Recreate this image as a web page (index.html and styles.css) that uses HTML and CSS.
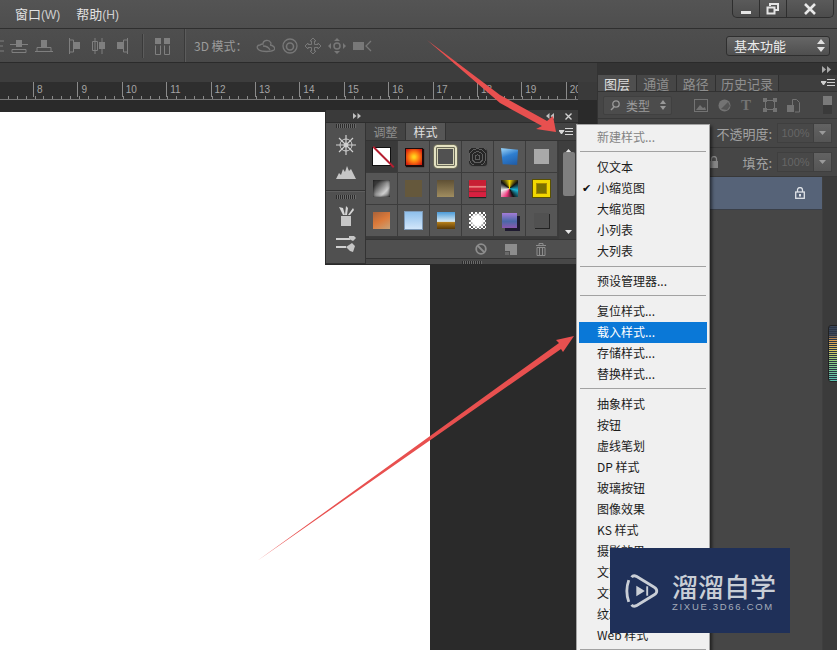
FILE: index.html
```html
<!DOCTYPE html>
<html lang="zh">
<head>
<meta charset="utf-8">
<title>样式菜单</title>
<link rel="stylesheet" href="styles.css">
</head>
<body>
<div class="app">
  <header class="menubar">
    <nav class="menus"><span class="menu-word">窗口<i>(W)</i></span><span class="menu-word">帮助<i>(H)</i></span></nav>
    <div class="winctl">
      <span class="winbtn"><svg width="12" height="12" viewBox="0 0 12 12"><rect x="1" y="8" width="10" height="3" fill="#e4e4e4"/></svg></span>
      <span class="winbtn"><svg width="14" height="12" viewBox="0 0 14 12"><path d="M4 3V1h8v6h-3M1.500 4.500h7v6h-7z" fill="none" stroke="#e4e4e4" stroke-width="2"/></svg></span>
      <span class="winbtn wide"><svg width="12" height="12" viewBox="0 0 12 12"><path d="M1 1l10 10M11 1L1 11" stroke="#e8e8e8" stroke-width="2.600"/></svg></span>
    </div>
  </header>

  <section class="options">
    <svg class="oi first" width="4" height="16" viewBox="0 0 4 16"><path d="M0 3h4M0 8h3M0 13h4" stroke="#7f7f7f"/></svg>
    <svg class="oi a" width="18" height="16" viewBox="0 0 18 16"><path d="M0 6.500h18M2 11.500h14M2 11.500v3h14v-3" fill="none" stroke="#7f7f7f"/><rect x="6" y="2" width="6" height="7" fill="#7f7f7f"/></svg>
    <svg class="oi b" width="18" height="16" viewBox="0 0 18 16"><path d="M0 13.500h18M2 9.500v4M16 9.500v4M2 9.500h14" fill="none" stroke="#7f7f7f"/><rect x="6" y="2" width="6" height="7" fill="#7f7f7f"/></svg>
    <svg class="oi gap" width="13" height="18" viewBox="0 0 13 18"><path d="M1.500 1v16M1.500 3h4v12h-4" fill="none" stroke="#7f7f7f"/><rect x="6" y="5" width="6" height="7" fill="#7f7f7f"/></svg>
    <svg class="oi v" width="13" height="18" viewBox="0 0 13 18"><path d="M3 1v16M3 4.500H0.500v9H5.500v-9zM10 1v16" fill="none" stroke="#7f7f7f"/><rect x="7" y="5" width="6" height="7" fill="#7f7f7f"/></svg>
    <svg class="oi v" width="13" height="18" viewBox="0 0 13 18"><path d="M11.500 1v16M11.500 3h-4v12h4" fill="none" stroke="#7f7f7f"/><rect x="1" y="5" width="6" height="7" fill="#7f7f7f"/></svg>
    <span class="osep first-sep"></span>
    <svg class="oi dist" width="17" height="18" viewBox="0 0 17 18"><path d="M1.500 8.500v9h5v-9M10.500 8.500v9h5v-9" fill="none" stroke="#7f7f7f"/><rect x="1" y="1" width="6" height="6" fill="#7f7f7f"/><rect x="10" y="1" width="6" height="6" fill="#7f7f7f"/></svg>
    <span class="osep second-sep"></span>
    <span class="mode">3D 模式：</span>
    <svg class="oi m3" width="19" height="16" viewBox="0 0 19 16"><path d="M3 12c-3-2-2-5 1-5 1-1 2-1 3-1 0-4 6-5 8-1 0 1 0 2-1 2 3 0 6 3 4 5-3 2-12 2-15 0zM7 8c3 0 6 2 7 4" fill="none" stroke="#787878" stroke-width="1.300"/></svg>
    <svg class="oi m3" width="16" height="16" viewBox="0 0 16 16"><circle cx="8" cy="8" r="7" fill="none" stroke="#787878" stroke-width="1.300"/><circle cx="8" cy="8.500" r="3.500" fill="none" stroke="#787878" stroke-width="1.600"/></svg>
    <svg class="oi m3" width="16" height="16" viewBox="0 0 16 16"><path d="M8 0l3 3H9.500v3.500H13V5l3 3-3 3V9.500H9.500V13H11l-3 3-3-3h1.500V9.500H3V11L0 8l3-3v1.500h3.500V3H5z" fill="none" stroke="#787878"/></svg>
    <svg class="oi m3" width="18" height="16" viewBox="0 0 18 16"><path d="M9 0l3 3H6zM9 16l3-3H6zM0 8l3-3v6zM18 8l-3-3v6z" fill="#787878"/><circle cx="9" cy="8" r="3" fill="none" stroke="#787878" stroke-width="1.500"/></svg>
    <svg class="oi m3" width="19" height="12" viewBox="0 0 19 12"><rect x="0" y="2" width="11" height="8" fill="#787878"/><path d="M18 1l-5 5 5 5" fill="none" stroke="#787878" stroke-width="1.300"/></svg>
    <span class="workspace">基本功能<svg width="8" height="13" viewBox="0 0 8 13"><path d="M4 0l4 5H0zM4 13l4-5H0z" fill="#e0e0e0"/></svg></span>
  </section>

  <main class="work">
    <section class="doc">
      <div class="doctabs"></div>
      <div class="ruler-row">
        <div class="ruler">
          <span class="rn lead"></span><span class="rn">8</span><span class="rn">9</span><span class="rn">10</span><span class="rn">11</span><span class="rn">12</span><span class="rn">13</span><span class="rn">14</span><span class="rn">15</span><span class="rn">16</span><span class="rn">17</span><span class="rn">18</span><span class="rn">19</span><span class="rn">20</span>
        </div>
      </div>
      <div class="pasteboard"><div class="canvas"></div></div>
    </section>

    <aside class="side">
      <div class="side-head"><svg width="9" height="7" viewBox="0 0 9 7"><path d="M0 0l4 3.500L0 7zM5 0l4 3.500L5 7z" fill="#a8a8a8"/></svg></div>
      <div class="side-tabs">
        <span class="stab on">图层</span><span class="stab">通道</span><span class="stab">路径</span><span class="stab four">历史记录</span>
        <svg class="side-menu" width="14" height="8" viewBox="0 0 14 8"><path d="M0 2.500h5L2.500 6zM6 .5h8M6 3.500h8M6 6.500h8" fill="#d0d0d0" stroke="#d0d0d0" stroke-width="1"/></svg>
      </div>
      <div class="filter-row">
        <span class="kind"><svg width="10" height="11" viewBox="0 0 10 11"><circle cx="6" cy="4" r="3.200" fill="none" stroke="#999" stroke-width="1.300"/><path d="M4 7l-3 3" stroke="#999" stroke-width="1.500"/></svg><b>类型</b><svg class="updown" width="6" height="10" viewBox="0 0 6 10"><path d="M3 0l3 4H0zM3 10l3-4H0z" fill="#999"/></svg></span>
        <svg class="fi first-fi" width="14" height="13" viewBox="0 0 14 13"><rect x=".5" y=".5" width="13" height="12" fill="none" stroke="#737373"/><path d="M2 11l4-5 3 3 2-1 1 3z" fill="#737373"/></svg>
        <svg class="fi" width="13" height="13" viewBox="0 0 13 13"><circle cx="6.500" cy="6.500" r="6" fill="#737373"/><path d="M3 10L10 3l2 4-3 4z" fill="#555"/></svg>
        <span class="fi-t">T</span>
        <svg class="fi" width="14" height="14" viewBox="0 0 14 14"><path d="M2.500 2.500h9v9h-9z" fill="none" stroke="#737373"/><path d="M0 0h4v4H0zM10 0h4v4h-4zM0 10h4v4H0zM10 10h4v4h-4z" fill="#737373"/></svg>
        <svg class="fi" width="13" height="15" viewBox="0 0 13 15"><path d="M5.500 7V1.500h4l3 3V14H8" fill="none" stroke="#737373"/><rect x="0" y="7" width="7" height="7" fill="#737373"/></svg>
        <span class="toggle"></span>
      </div>
      <div class="prop-row first-prop">
        <span class="plabel">不透明度:</span><span class="pval">100%</span><span class="pbtn"><svg width="7" height="4" viewBox="0 0 7 4"><path d="M0 0h7L3.500 4z" fill="#9a9a9a"/></svg></span>
      </div>
      <div class="prop-row">
        <svg class="lock-part" width="8" height="12" viewBox="0 0 8 12"><rect x="0" y="5" width="8" height="7" fill="#858585"/><path d="M1.500 5V3a2.500 2.500 0 0 1 5 0v2" fill="none" stroke="#858585" stroke-width="1.300"/></svg>
        <span class="plabel">填充:</span><span class="pval">100%</span><span class="pbtn"><svg width="7" height="4" viewBox="0 0 7 4"><path d="M0 0h7L3.500 4z" fill="#9a9a9a"/></svg></span>
      </div>
      <div class="list-wrap">
        <div class="list">
          <div class="layer"><svg width="10" height="12" viewBox="0 0 10 12"><rect x=".7" y="5" width="8.600" height="6.300" fill="none" stroke="#dfe3e8" stroke-width="1.300"/><path d="M2.500 5V3a2.500 2.500 0 0 1 5 0v2" fill="none" stroke="#dfe3e8" stroke-width="1.300"/><rect x="4" y="7" width="2" height="2.500" fill="#dfe3e8"/></svg></div>
        </div>
        <div class="strip"></div>
      </div>
    </aside>
  </main>

  <!-- floating styles panel -->
  <section class="float">
    <div class="float-head">
      <svg width="8" height="6" viewBox="0 0 8 6"><path d="M0 0l3.500 3L0 6zM4.500 0L8 3 4.500 6z" fill="#c0c0c0"/></svg>
      <span class="float-ctl">
        <svg width="8" height="6" viewBox="0 0 8 6"><path d="M3.500 0L0 3l3.500 3zM8 0L4.500 3 8 6z" fill="#c0c0c0"/></svg>
        <svg width="7" height="7" viewBox="0 0 7 7"><path d="M.5.500l6 6M6.500.500l-6 6" stroke="#d0d0d0" stroke-width="1.400"/></svg>
      </span>
    </div>
    <div class="float-body">
      <div class="dock">
        <div class="dock-group">
          <span class="grip"></span>
          <svg width="20" height="20" viewBox="0 0 20 20"><g stroke="#cfcfcf" fill="none"><circle cx="10" cy="10" r="6"/><circle cx="10" cy="10" r="2" fill="#cfcfcf"/><path d="M10 0v20M0 10h20M3 3l14 14M17 3L3 17" stroke-width="1.200"/></g></svg>
          <svg class="mount" width="20" height="13" viewBox="0 0 20 13"><path d="M0 13l3-6 2 2 2-6 2 3 2-6 2 5 2-2 2 4 3 6z" fill="#c6c6c6"/></svg>
        </div>
        <div class="dock-group second">
          <span class="grip"></span>
          <svg width="16" height="20" viewBox="0 0 16 20"><path d="M3 10h10v10H3z" fill="#c6c6c6"/><path d="M1 1l4 8h2L5 2zM8 0l-1 9h2l1-7zM15 2l-5 7h2l4-5z" fill="#d4d4d4"/></svg>
          <svg class="tools" width="20" height="16" viewBox="0 0 20 16"><path d="M0 3h14M0 11h10" stroke="#d0d0d0" stroke-width="2"/><path d="M13 0h5l2 2-3 3-4-2zM10 11l6-4 3 3-2 6-3-1z" fill="#c6c6c6"/></svg>
        </div>
      </div>
      <div class="float-main">
        <div class="ftabs">
          <span class="ftab">调整</span><span class="ftab on">样式</span>
          <svg class="fmenu" width="14" height="8" viewBox="0 0 14 8"><path d="M0 2.500h5L2.500 6zM6 .5h8M6 3.500h8M6 6.500h8" fill="#d8d8d8" stroke="#d8d8d8" stroke-width="1"/></svg>
        </div>
        <div class="swatch-area">
          <div class="swatches">
            <span class="cell dark"><i class="sw none"></i></span>
            <span class="cell"><i class="sw fire"></i></span>
            <span class="cell"><i class="sw ring"></i></span>
            <span class="cell"><i class="sw disc"></i></span>
            <span class="cell"><i class="sw blue"></i></span>
            <span class="cell"><i class="sw gray"></i></span>
            <span class="cell"><i class="sw steel"></i></span>
            <span class="cell"><i class="sw dim"></i></span>
            <span class="cell"><i class="sw tan"></i></span>
            <span class="cell"><i class="sw red"></i></span>
            <span class="cell"><i class="sw rainbow"></i></span>
            <span class="cell"><i class="sw gold"></i></span>
            <span class="cell"><i class="sw sunset"></i></span>
            <span class="cell"><i class="sw sky"></i></span>
            <span class="cell"><i class="sw land"></i></span>
            <span class="cell"><i class="sw noise"></i></span>
            <span class="cell"><i class="sw purple"></i></span>
            <span class="cell"><i class="sw flat"></i></span>
          </div>
          <div class="vscroll">
            <svg width="7" height="4" viewBox="0 0 7 4"><path d="M3.500 0L7 4H0z" fill="#e6e6e6"/></svg>
            <span class="thumb"></span>
            <svg width="7" height="4" viewBox="0 0 7 4"><path d="M0 0h7L3.500 4z" fill="#e6e6e6"/></svg>
          </div>
        </div>
        <div class="fbottom">
          <svg width="12" height="12" viewBox="0 0 12 12"><circle cx="6" cy="6" r="4.800" fill="none" stroke="#8d8d8d" stroke-width="1.800"/><path d="M2.500 2.500l7 7" stroke="#8d8d8d" stroke-width="1.800"/></svg>
          <svg width="12" height="12" viewBox="0 0 12 12"><path d="M0 1h12v11H5V8H0z" fill="#8d8d8d"/><path d="M0 9h4v3H0z" fill="#6a6a6a"/></svg>
          <svg width="12" height="13" viewBox="0 0 12 13"><path d="M1 2.500h10M4 2V.5h4V2M2 4.500h8V12.500H2zM4.500 5v7M7.500 5v7" fill="none" stroke="#8d8d8d"/></svg>
        </div>
        <div class="fgrip"><span class="grip"></span></div>
      </div>
    </div>
  </section>

  <!-- flyout menu -->
  <nav class="flyout">
    <div class="mi off">新建样式...</div>
    <div class="msep"></div>
    <div class="mi">仅文本</div>
    <div class="mi check">小缩览图</div>
    <div class="mi">大缩览图</div>
    <div class="mi">小列表</div>
    <div class="mi">大列表</div>
    <div class="msep low"></div>
    <div class="mi">预设管理器...</div>
    <div class="msep"></div>
    <div class="mi">复位样式...</div>
    <div class="mi hot">载入样式...</div>
    <div class="mi">存储样式...</div>
    <div class="mi">替换样式...</div>
    <div class="msep"></div>
    <div class="mi">抽象样式</div>
    <div class="mi">按钮</div>
    <div class="mi">虚线笔划</div>
    <div class="mi">DP 样式</div>
    <div class="mi">玻璃按钮</div>
    <div class="mi">图像效果</div>
    <div class="mi">KS 样式</div>
    <div class="mi">摄影效果</div>
    <div class="mi">文字效果 2</div>
    <div class="mi">文字效果</div>
    <div class="mi">纹理</div>
    <div class="mi">Web 样式</div>
    <div class="msep"></div>
  </nav>

  <span class="meter"></span>

  <svg class="arrows" width="837" height="650" viewBox="0 0 837 650">
    <path d="M427 40L500 95L547 121L553 116L556 132L536 129L542 126L500 103Z" fill="#e8504f"/>
    <path d="M257 561L559 343L556 340L574 336L563 352L561 349Z" fill="#e8504f"/>
  </svg>

  <aside class="mark">
    <svg width="34" height="36" viewBox="0 0 36 38"><path d="M7 4.500c1-1.500 3-2 5-1L31 15c3.500 2 3.500 6 0 8L12 34.500c-2 1-4 .5-5-1" fill="none" stroke="#c9ced6" stroke-width="3"/><path d="M4 7.500c-2.500 7-2.500 16 0 23" fill="none" stroke="#c9ced6" stroke-width="3"/><path d="M12 13.500l9 5.500-9 5.500z" fill="#c9ced6"/><rect x="22.500" y="14" width="2" height="10" fill="#c9ced6"/></svg>
    <div class="mark-text"><strong>溜溜自学</strong><small>ZIXUE.3D66.COM</small></div>
  </aside>
</div>
</body>
</html>
```

FILE: styles.css
```css
* { box-sizing: border-box; }
html, body { margin: 0; height: 100%; overflow: hidden; }
body { background: #2a2a2a; font-family: "Noto Sans CJK SC", "Liberation Sans", sans-serif; }
svg { display: block; flex: none; }
i { font-style: normal; }
.app { position: relative; width: 837px; height: 650px; overflow: hidden; display: flex; flex-direction: column; }

/* Top menu */
.menubar { height: 29px; flex: none; display: flex; justify-content: space-between; background: linear-gradient(#545454, #4e4e4e); border-bottom: 1px solid #2f2f2f; }
.menus { display: flex; gap: 16px; padding-left: 15px; align-items: center; height: 28px; }
.menu-word { font-size: 13px; line-height: 28px; color: #e2e2e2; }
.menu-word i { font-family: "Liberation Sans", sans-serif; font-size: 12px; color: #cfcfcf; }
.winctl { display: flex; margin-right: 3px; height: 18px; border: 1px solid #2e2e2e; border-top: 0; border-radius: 0 0 5px 5px; background: linear-gradient(#5a5a5a, #4c4c4c); }
.winbtn { width: 27px; display: flex; align-items: center; justify-content: center; border-right: 1px solid #2e2e2e; }
.winbtn.wide { width: 46px; border-right: 0; }

/* Options */
.options { height: 34px; flex: none; display: flex; align-items: center; background: linear-gradient(#4e4e4e, #494949); border-bottom: 1px solid #2b2b2b; }
.oi { margin-left: 7px; }
.oi.first { margin-left: 0; }
.oi.a { margin-left: 6px; }
.oi.gap { margin-left: 15px; }
.oi.v { margin-left: 11px; }
.oi.dist { margin-left: 10px; }
.osep { width: 2px; height: 24px; background: #3a3a3a; border-right: 1px solid #5c5c5c; }
.first-sep { margin-left: 13px; }
.second-sep { margin-left: 13px; height: 33px; }
.mode { margin: 0 2px 0 8px; font-size: 12px; color: #9b9b9b; white-space: nowrap; width: 53px; }
.workspace { margin-left: auto; margin-right: 7px; width: 104px; height: 20px; display: flex; align-items: center; justify-content: space-between; padding: 0 4px 0 7px; font-size: 13px; color: #ececec; border: 1px solid #2f2f2f; border-radius: 3px; background: linear-gradient(#666, #4f4f4f); }

/* Workspace */
.work { flex: 1; display: flex; min-height: 0; }
.doc { width: 597px; flex: none; display: flex; flex-direction: column; background: #2a2a2a; }
.doctabs { height: 19px; flex: none; background: #3d3d3d; }
.ruler-row { height: 18px; flex: none; background: #3a3a3a; padding-right: 19px; }
.ruler { height: 18px; display: flex; overflow: hidden; background-color: #2e2e2e; background-image: repeating-linear-gradient(90deg, #8a8a8a 0 1px, transparent 1px 8.860px), linear-gradient(#777, #777); background-size: 100% 3px, 100% 1px; background-position: 7.500px 14px, 0 17px; background-repeat: no-repeat; }
.rn { width: 44.400px; flex: none; height: 15px; border-left: 1px solid #8a8a8a; padding-left: 3px; font: 10px/15px "Liberation Sans", sans-serif; color: #a4a4a4; }
.rn.lead { width: 33px; border-left: 0; }
.pasteboard { flex: 1; padding-top: 12px; }
.canvas { width: 430px; height: 100%; background: #fff; }

/* Layers */
.side { flex: 1; min-width: 0; display: flex; flex-direction: column; background: #464646; border-left: 1px solid #333; }
.side-head { height: 12px; flex: none; background: #343434; display: flex; justify-content: flex-end; align-items: center; padding-right: 6px; }
.side-tabs { height: 17px; flex: none; display: flex; align-items: stretch; background: #3e3e3e; position: relative; border-bottom: 1px solid #323232; }
.stab { width: 39.500px; font-size: 13px; line-height: 17px; text-align: center; color: #8f8f8f; border-right: 1px solid #303030; background: #464646; }
.stab.on { background: #4f4f4f; color: #dedede; width: 39px; }
.stab.four { width: 63px; }
.side-menu { position: absolute; right: 2px; top: 4px; }
.filter-row { height: 27px; flex: none; display: flex; align-items: center; padding-left: 5px; border-bottom: 1px solid #383838; }
.kind { width: 69px; height: 19px; display: flex; align-items: center; padding: 0 5px 0 6px; background: #4c4c4c; border: 1px solid #404040; border-radius: 2px; color: #9c9c9c; font-size: 12px; }
.kind b { font-weight: 400; margin-left: 6px; }
.updown { margin-left: auto; }
.fi { margin-left: 10px; }
.first-fi { margin-left: 22px; }
.fi-t { font: bold 15px/15px "Liberation Serif", serif; color: #737373; margin-left: 10px; width: 12px; }
.toggle { width: 9px; height: 18px; margin-left: auto; margin-right: 5px; background: linear-gradient(#7a7a7a 50%, #3a3a3a 50%); }
.prop-row { height: 29px; flex: none; display: flex; align-items: center; justify-content: flex-end; padding-right: 5px; border-bottom: 1px solid #383838; position: relative; }
.lock-part { position: absolute; left: 112px; top: 8px; }
.plabel { font-size: 13px; color: #a2a2a2; margin-right: 5px; }
.pval { width: 37px; height: 20px; background: #484848; border: 1px solid #3f3f3f; font: 11px/18px "Liberation Sans", sans-serif; color: #666; text-align: center; }
.pbtn { width: 18px; height: 20px; background: linear-gradient(#626262, #555); border: 1px solid #3f3f3f; border-left: 0; display: flex; align-items: center; justify-content: center; }
.list-wrap { flex: 1; display: flex; min-height: 0; }
.list { flex: 1; background: #464646; }
.layer { height: 33px; background: #566378; border-bottom: 1px solid #3a3f48; display: flex; align-items: center; justify-content: flex-end; padding-right: 17px; }
.strip { width: 15px; flex: none; background: #3b3b3b; border-left: 1px solid #3f3f3f; }

/* Floating panel */
.float { position: absolute; left: 325px; top: 109px; width: 253px; height: 156px; background: #4d4d4d; border: 1px solid #2a2a2a; border-right: 0; display: flex; flex-direction: column; }
.float-head { height: 13px; flex: none; background: #3a3a3a; display: flex; align-items: center; justify-content: space-between; padding: 0 6px 0 27px; border-bottom: 1px solid #2d2d2d; }
.float-ctl { display: flex; gap: 11px; align-items: center; }
.float-body { flex: 1; display: flex; min-height: 0; }
.dock { width: 40px; flex: none; background: #505050; border-right: 1px solid #333; display: flex; flex-direction: column; }
.dock-group { height: 68px; display: flex; flex-direction: column; align-items: center; border-bottom: 1px solid #333; padding-top: 1px; }
.dock-group.second { flex: 1; border-top: 1px solid #5e5e5e; height: auto; padding-top: 3px; }
.grip { display: block; width: 20px; height: 4px; flex: none; margin-bottom: 7px; background: repeating-linear-gradient(90deg, #2c2c2c 0 1px, #6a6a6a 1px 2px); }
.mount { margin-top: 11px; }
.tools { margin-top: 10px; }
.float-main { flex: 1; min-width: 0; display: flex; flex-direction: column; }
.ftabs { height: 18px; flex: none; display: flex; background: #444; position: relative; border-bottom: 1px solid #333; }
.ftab { width: 40px; font-size: 12px; line-height: 17px; text-align: center; color: #8e8e8e; border-right: 1px solid #333; }
.ftab.on { background: #565656; color: #e0e0e0; }
.fmenu { position: absolute; right: 5px; top: 5px; }
.swatch-area { height: 98px; flex: none; display: flex; }
.swatches { width: 194px; height: 98px; display: grid; grid-template-columns: repeat(6, 32px); grid-auto-rows: 32px; gap: 0; background: #3a3a3a; padding-bottom: 2px; }
.cell { display: flex; align-items: center; justify-content: center; background: #565656; border-right: 1px solid #3c3c3c; border-bottom: 1px solid #3c3c3c; }
.cell.dark { background: #3a3a3a; }
.sw { display: block; width: 17px; height: 17px; position: relative; }
.none { background: #fff; outline: 1px solid #111; }
.none::after { content: ""; position: absolute; left: -4px; top: 8px; width: 29px; height: 2px; background: #b51e30; transform: rotate(45deg); }
.fire { background: radial-gradient(#ffd21e 10%, #ff7c10 45%, #d21c10 90%); box-shadow: 0 0 0 1px #1c0c0c, 1px 1px 1px 1px #1c0c0c; width: 16px; height: 16px; }
.ring { width: 23px; height: 23px; background: #515151; border: 2px solid #e4e2c2; outline: 1px solid #6b6a58; box-shadow: inset 0 0 0 1px #6b6a58, inset 0 0 0 2px #d8d6b6; border-radius: 3px; }
.disc { background: repeating-radial-gradient(circle at 50% 55%, #262626 0 2px, #5e5e5e 2px 3px); box-shadow: 1px 1px 1px #222; border-radius: 3px; }
.blue { background: linear-gradient(160deg, #8bc6f0 10%, #2e7ed0 45%, #1f5aa4); clip-path: polygon(0 0, 100% 10%, 95% 100%, 10% 95%); }
.gray { background: #a9a9a9; width: 15px; height: 15px; }
.steel { background: linear-gradient(135deg, #3a3a3a 20%, #cfcfcf 70%, #555); box-shadow: inset 0 0 3px #111; }
.dim { background: #65583c; }
.tan { background: linear-gradient(#5f5034, #a08d60); }
.red { background: linear-gradient(#c81f34 0 32%, #e88080 36% 42%, #cc2238 48% 62%, #9a2030 66% 70%, #d82040 74%); box-shadow: 0 1px 1px #222; }
.rainbow { background: conic-gradient(#f2d600, #111, #19b6d8, #111, #f23a80, #eee, #111, #f2d600); }
.gold { background: #7a7000; border: 3px solid #f2d800; box-shadow: inset 0 0 0 1px #a88a00; outline: 1px solid #5a5000; }
.sunset { background: linear-gradient(150deg, #a8623a, #dc7a3a 50%, #c8a278); }
.sky { background: linear-gradient(#8fc0ec, #d2e6fa); outline: 1px solid #7e9ab8; }
.land { background: linear-gradient(#4a9ad8, #d8eaf4 55%, #b07a18 62%, #5a3a08); width: 18px; }
.noise { background: radial-gradient(#fff 40%, #fff0 70%), repeating-conic-gradient(#fff 0 25%, #555 0 50%) 0 0 / 4px 4px, #ddd; }
.purple { background: linear-gradient(#a47cd8, #4a68a8 55%, #8a58b0); box-shadow: 3px 3px 0 #1e1a30; width: 15px; height: 15px; }
.flat { background: #515151; box-shadow: 1px 1px 0 #222; width: 15px; height: 15px; }
.vscroll { flex: 1; display: flex; flex-direction: column; align-items: center; justify-content: space-between; padding: 8px 0 5px; background: #3e3e3e; margin-left: -1px; }
.thumb { width: 12px; height: 44px; margin: 0 0 26px; margin-top: -12px; border-radius: 2px; background: #7f7f7f; }
.vscroll svg:last-child { margin-top: -2px; }
.fbottom { height: 20px; flex: none; display: flex; align-items: center; justify-content: flex-end; gap: 18px; padding-right: 31px; background: #4f4f4f; border-top: 1px solid #333; border-bottom: 1px solid #333; }
.fgrip { flex: 1; display: flex; justify-content: center; background: #484848; padding-top: 2px; }
.fgrip .grip { margin: 0; height: 3px; }

/* Flyout */
.flyout { position: absolute; left: 576px; top: 124px; width: 134px; height: 530px; padding: 2px 2px 0; background: #f0f0f0; border: 1px solid #a4a4a4; box-shadow: 2px 2px 3px rgba(0,0,0,.55); }
.mi { height: 21px; padding-left: 18px; font-size: 12px; line-height: 20px; color: #1c1c1c; position: relative; white-space: nowrap; }
.mi.off { color: #838383; }
.mi.hot { background: #0a78d7; color: #fff; margin-right: 0; }
.mi.check::before { content: "✔"; position: absolute; left: 3px; top: 0; font: 11px/21px "DejaVu Sans", sans-serif; color: #111; }
.msep { height: 9px; padding-top: 3px; }
.msep.low { padding-top: 4px; }
.msep::before { content: ""; display: block; height: 1px; margin: 0 1px; background: #a2a2a2; }

/* Overlays */
.meter { position: absolute; left: 828px; top: 325px; width: 12px; height: 57px; border: 1px solid #222; border-radius: 3px; background: repeating-linear-gradient(#0000 0 1px, #2b3546 1px 2px), linear-gradient(#3a4658 0 15%, #d69a50 25%, #d8c860 45%, #8ecf80 65%, #5cc0b0 100%); }
.arrows { position: absolute; left: 0; top: 0; pointer-events: none; }
.mark { position: absolute; left: 610px; top: 548px; width: 180px; height: 85px; background: #1f3059; display: flex; align-items: center; padding: 0 0 0 15px; gap: 13px; color: #c9ced6; }
.mark-text { display: flex; flex-direction: column; margin-top: 1px; }
.mark-text strong { font-size: 26px; line-height: 30px; font-weight: 500; white-space: nowrap; }
.mark-text small { font: 9.500px/11px "Liberation Sans", sans-serif; letter-spacing: 1.700px; color: #a4acba; white-space: nowrap; }
```
